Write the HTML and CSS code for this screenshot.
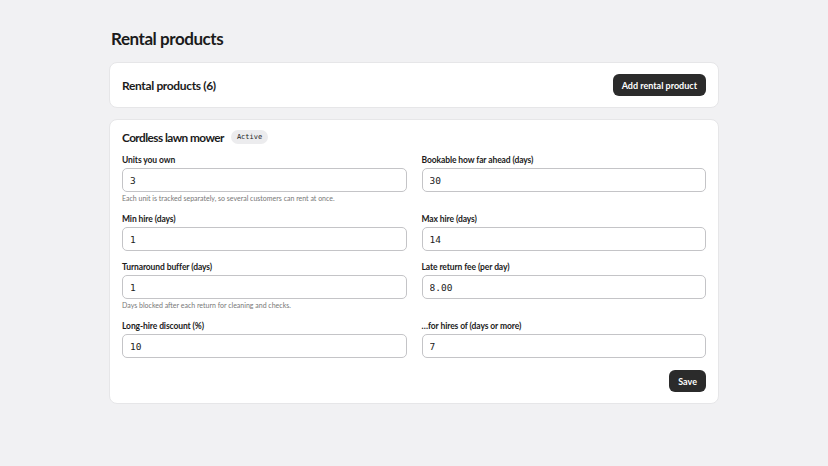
FILE: index.html
```html
<!DOCTYPE html>
<html lang="en">
<head>
  <meta charset="UTF-8">
  <meta name="viewport" content="width=device-width, initial-scale=1.0">
  <title>Rental products</title>
  <link rel="stylesheet" href="styles.css">
</head>
<body>
  <main class="page">
    <h1 class="page-title">Rental products</h1>

    <section class="card list-card">
      <h2 class="list-title">Rental products (6)</h2>
      <button class="btn">Add rental product</button>
    </section>

    <section class="card product-card">
      <div class="product-head">
        <h3 class="product-name">Cordless lawn mower</h3>
        <span class="badge">Active</span>
      </div>

      <form class="fields">
        <div class="field">
          <label>Units you own</label>
          <input type="text" value="3">
          <p class="hint">Each unit is tracked separately, so several customers can rent at once.</p>
        </div>
        <div class="field">
          <label>Bookable how far ahead (days)</label>
          <input type="text" value="30">
        </div>
        <div class="field">
          <label>Min hire (days)</label>
          <input type="text" value="1">
        </div>
        <div class="field">
          <label>Max hire (days)</label>
          <input type="text" value="14">
        </div>
        <div class="field">
          <label>Turnaround buffer (days)</label>
          <input type="text" value="1">
          <p class="hint">Days blocked after each return for cleaning and checks.</p>
        </div>
        <div class="field">
          <label>Late return fee (per day)</label>
          <input type="text" value="8.00">
        </div>
        <div class="field">
          <label>Long-hire discount (%)</label>
          <input type="text" value="10">
        </div>
        <div class="field">
          <label>…for hires of (days or more)</label>
          <input type="text" value="7">
        </div>
      </form>

      <div class="actions">
        <button class="btn">Save</button>
      </div>
    </section>
  </main>
</body>
</html>
```

FILE: styles.css
```css
body {
  font-family: 'Lato', sans-serif;
  margin: 0;
  padding: 0;
  background: #f1f1f3;
  color: #1b1b1b;
}
.page {
  max-width: 610px;
  margin: 0 auto;
  padding-top: 28px;
}
.page-title {
  font-size: 17px;
  font-weight: 700;
  letter-spacing: -0.45px;
  margin: 0 0 12px 2px;
  line-height: 22px;
}
.card {
  background: white;
  border: 1px solid #e6e6e8;
  border-radius: 8px;
  margin-bottom: 11px;
}
.list-card {
  display: flex;
  justify-content: space-between;
  align-items: center;
  padding: 11px 12px;
}
.list-title {
  font-size: 12px;
  font-weight: 700;
  letter-spacing: -0.35px;
  margin: 0;
}
.btn {
  font-family: 'Lato', sans-serif;
  background-color: #2b2b2b;
  color: white;
  border: none;
  border-radius: 6px;
  padding: 0 9px;
  height: 22px;
  font-size: 9px;
  font-weight: 700;
  cursor: pointer;
}
.product-card {
  padding: 9px 12px 11px;
}
.product-head {
  display: flex;
  align-items: center;
  gap: 7px;
  height: 16px;
  margin-bottom: 10px;
}
.product-name {
  font-size: 11.8px;
  font-weight: 700;
  letter-spacing: -0.55px;
  margin: 0;
}
.badge {
  font-family: 'DejaVu Sans Mono', monospace;
  font-size: 7px;
  background: #ececee;
  border-radius: 8px;
  padding: 3px 6px;
}
.fields {
  display: grid;
  grid-template-columns: 1fr 1fr;
  column-gap: 15px;
  row-gap: 11px;
  align-items: start;
}
.field label {
  display: block;
  font-size: 8.5px;
  font-weight: 700;
  letter-spacing: -0.1px;
  line-height: 11px;
  margin-bottom: 2px;
}
.field input {
  display: block;
  box-sizing: border-box;
  width: 100%;
  height: 24px;
  border: 1px solid #c4c4c7;
  border-radius: 5px;
  padding: 0 7px;
  font-family: 'DejaVu Sans Mono', monospace;
  font-size: 9.5px;
  color: #1b1b1b;
  outline: none;
}
.hint {
  font-size: 7px;
  color: #777;
  margin: 2px 0 0;
  line-height: 9px;
}
.actions {
  display: flex;
  justify-content: flex-end;
  margin-top: 12px;
}
```
